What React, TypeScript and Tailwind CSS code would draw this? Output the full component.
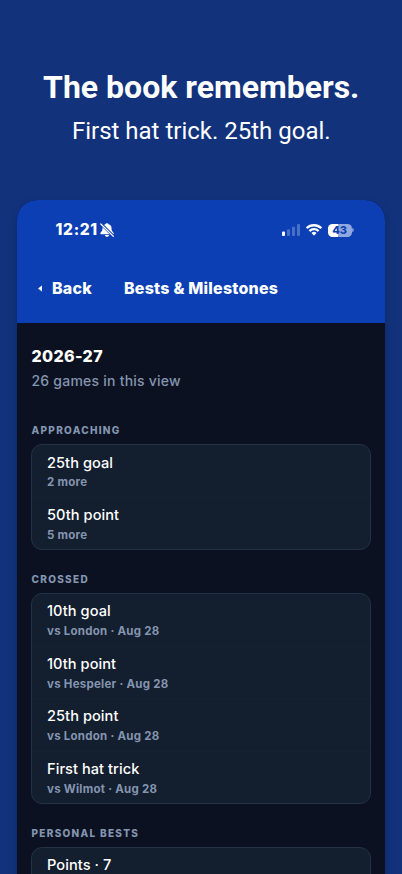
type Row = { label: string; detail?: string };

const sections: { title: string; rows: Row[] }[] = [
  {
    title: "Approaching",
    rows: [
      { label: "25th goal", detail: "2 more" },
      { label: "50th point", detail: "5 more" },
    ],
  },
  {
    title: "Crossed",
    rows: [
      { label: "10th goal", detail: "vs London · Aug 28" },
      { label: "10th point", detail: "vs Hespeler · Aug 28" },
      { label: "25th point", detail: "vs London · Aug 28" },
      { label: "First hat trick", detail: "vs Wilmot · Aug 28" },
    ],
  },
  {
    title: "Personal bests",
    rows: [{ label: "Points · 7" }],
  },
];

function BellOff() {
  return (
    <svg viewBox="0 0 14 14" className="ml-[2px] h-[14px] w-[14px]" aria-hidden="true">
      <path
        d="M7 .2c-.9 0-1.400.5-1.500 1.100C3.500 1.800 2.500 3.300 2.500 5.100c0 2.300-.5 3.300-1.800 4.500-.8.800-.5 1.700.4 1.700h11.800c.9 0 1.200-.9.4-1.700-1.300-1.200-1.800-2.200-1.800-4.500 0-1.800-1-3.300-3-3.800C8.400.7 7.900.2 7 .2Z"
        fill="#fff"
      />
      <path d="M4.900 12h4.200c-.2 1.100-1.100 1.800-2.100 1.800S5.100 13.100 4.900 12Z" fill="#fff" />
      <path d="M1.200 1 13 12.800" stroke="#0c3fb3" strokeWidth="2.800" />
      <path d="M.8 1 13.300 13.300" stroke="#fff" strokeWidth="1.200" strokeLinecap="round" />
    </svg>
  );
}

function Signal() {
  return (
    <svg viewBox="0 0 18 12" className="h-[12px] w-[18px]" fill="#fff" aria-hidden="true">
      <rect x="0" y="7.500" width="3" height="4.500" rx=".9" />
      <rect x="5" y="5.200" width="3" height="6.800" rx=".9" opacity=".25" />
      <rect x="10" y="2.800" width="3" height="9.200" rx=".9" opacity=".25" />
      <rect x="15" y="0" width="3" height="12" rx=".9" opacity=".25" />
    </svg>
  );
}

function Wifi() {
  return (
    <svg viewBox="0 0 17 12" className="h-[11.500px] w-[16px]" fill="#fff" aria-hidden="true">
      <path d="M8.500 2.420c2.470 0 4.840.95 6.630 2.650.14.130.35.130.49 0l1.290-1.300a.36.360 0 0 0 0-.51c-4.700-4.500-12.120-4.500-16.820 0a.36.360 0 0 0 0 .51l1.290 1.300c.14.130.35.130.49 0A9.630 9.630 0 0 1 8.500 2.420Z" />
      <path d="M8.500 6.650c1.360 0 2.660.5 3.660 1.410.14.130.36.130.49 0l1.290-1.310a.36.360 0 0 0 0-.52 7.900 7.900 0 0 0-10.870 0 .36.360 0 0 0 0 .52l1.290 1.310c.13.130.35.130.49 0a5.440 5.440 0 0 1 3.650-1.410Z" />
      <path d="M11.020 9.500a.34.340 0 0 1-.1.260l-2.230 2.250a.27.270 0 0 1-.38 0L6.080 9.760a.34.340 0 0 1 .01-.52 3.750 3.750 0 0 1 4.820 0c.07.060.11.160.11.260Z" />
    </svg>
  );
}

function Battery() {
  return (
    <div className="flex items-center">
      <div className="flex h-[13px] w-[24px] items-center justify-center rounded-[4.500px] bg-[linear-gradient(90deg,#fff_43%,#90a7df_43%)] text-[11px] leading-none font-extrabold text-[#0c3fb3]">
        43
      </div>
      <div className="ml-[0.500px] h-1 w-[1.300px] rounded-r-full bg-[#7892d6]" />
    </div>
  );
}

function StatusBar() {
  return (
    <div className="flex h-[60px] items-center justify-between pr-[31.500px] pl-[38.500px]">
      <div className="flex items-center text-[15.500px] leading-none font-extrabold tracking-[0.700px]">
        12:21
        <BellOff />
      </div>
      <div className="flex items-center">
        <Signal />
        <div className="ml-[6px]">
          <Wifi />
        </div>
        <div className="ml-[6px]">
          <Battery />
        </div>
      </div>
    </div>
  );
}

export default function App() {
  return (
    <main className="h-[874px] overflow-hidden bg-[#12327c] text-white">
      <div className="flex h-[200px] flex-col items-center pt-[67px] pl-[0.500px] font-['Roboto',sans-serif]">
        <h1 className="text-[32px] leading-[40px] font-bold">The book remembers.</h1>
        <p className="mt-[8px] text-[24px] leading-[32px]">First hat trick. 25th goal.</p>
      </div>

      <div className="mx-[17px] h-[700px] overflow-hidden rounded-t-[20px] bg-[#0b1120] font-['Inter',sans-serif] shadow-[0_4px_10px_rgba(0,0,0,0.18)]">
        <header className="h-[122.500px] bg-[#0c3fb3]">
          <StatusBar />
          <div className="flex h-[56px] items-center pl-[20.500px] text-[16px] font-extrabold tracking-[0.220px]">
            <svg viewBox="0 0 4 6" className="h-[7px] w-[4.500px]" fill="#fff" aria-hidden="true">
              <path d="M4 0v6L0 3Z" />
            </svg>
            <span className="ml-[10px] w-[72px]">Back</span>
            <span>Bests &amp; Milestones</span>
          </div>
        </header>

        <div className="px-[14px] pt-[23px]">
          <h2 className="pl-[0.500px] text-[16px] leading-[20px] font-extrabold tracking-[0.350px]">2026-27</h2>
          <p className="mt-[5px] mb-[11px] pl-[0.500px] text-[14px] leading-[20px] font-medium tracking-[0.230px] text-[#8495b0]">
            26 games in this view
          </p>

          {sections.map((section) => (
            <section key={section.title} className="pt-[20.500px]">
              <h3 className="mb-[5.700px] h-[16.800px] pl-[0.500px] text-[10px] leading-[17px] font-extrabold tracking-[1.300px] text-[#8495b0] uppercase">
                {section.title}
              </h3>
              <div className="overflow-hidden rounded-[11px] border border-[#233244] bg-[#131e2e]">
                {section.rows.map((row) => (
                  <div
                    key={row.label}
                    className="h-[52.500px] border-b border-[#152130] pt-[8.200px] pl-[15px] last:h-[51.300px] last:border-b-0"
                  >
                    <div className="text-[14.600px] leading-[19px] font-medium tracking-[0.050px]">{row.label}</div>
                    {row.detail && (
                      <div className="mt-[1.800px] text-[11.500px] leading-[16px] font-bold tracking-[0.250px] text-[#8495b0]">
                        {row.detail}
                      </div>
                    )}
                  </div>
                ))}
              </div>
            </section>
          ))}
        </div>
      </div>
    </main>
  );
}
